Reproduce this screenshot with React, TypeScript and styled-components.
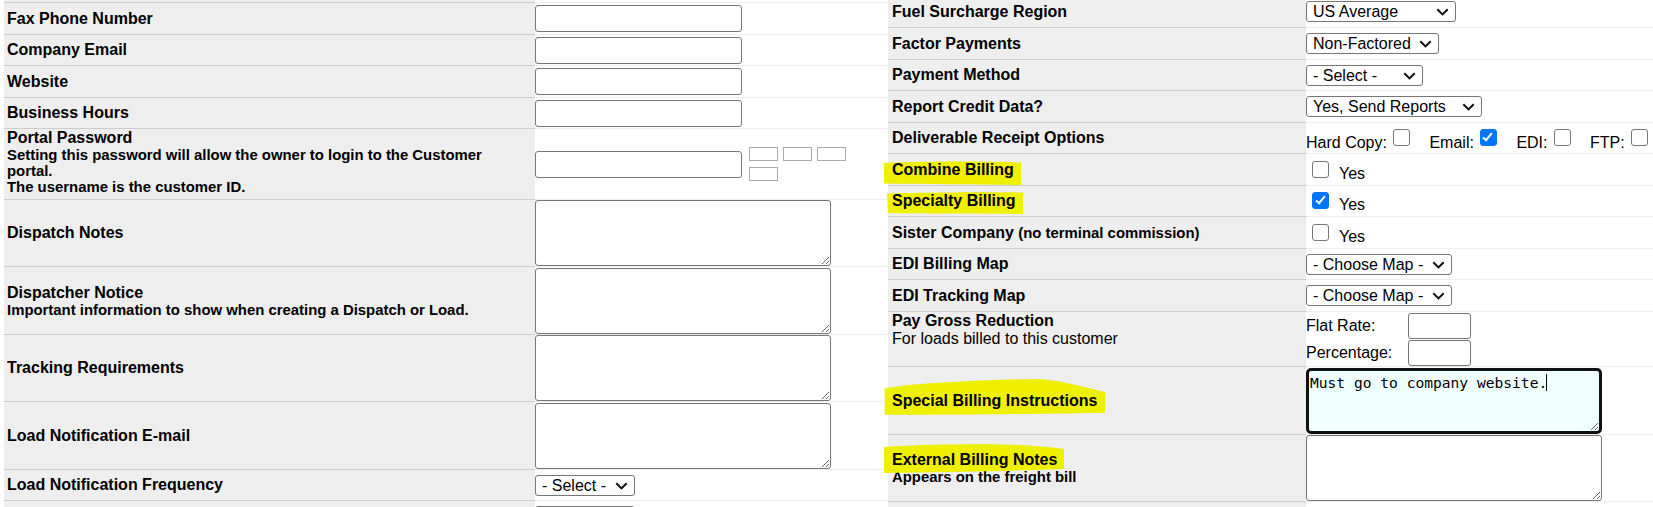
import React from "react";
import styled, { createGlobalStyle } from "styled-components";

const GlobalStyle = createGlobalStyle`
  *, *::before, *::after { box-sizing: border-box; }
  html, body { margin: 0; padding: 0; background: #fff; }
  body {
    font-family: "Liberation Sans", Arial, Helvetica, sans-serif;
    color: #000;
    overflow: hidden;
  }
`;

const Page = styled.div`
  display: flex;
  align-items: flex-start;
  gap: 1px;
  width: 1653px;
  height: 507px;
  padding-left: 4px;
  overflow: hidden;
`;

const Table = styled.div<{ $width?: number; $labelWidth: number; $pad: number; $offset?: number }>`
  --label-w: ${(p) => p.$labelWidth}px;
  --label-pad: ${(p) => p.$pad}px;
  display: flex;
  flex-direction: column;
  ${(p) => (p.$width ? `width: ${p.$width}px; flex: none;` : `flex: 1; min-width: 0;`)}
  margin-top: ${(p) => p.$offset ?? 0}px;
`;

const Row = styled.div<{ $h: number }>`
  display: grid;
  grid-template-columns: var(--label-w) 1fr;
  height: ${(p) => p.$h}px;
  flex: none;
`;

const LabelCell = styled.div<{ $top?: boolean }>`
  background: #eeeeee;
  border-bottom: 1px solid #cccccc;
  padding: 0 var(--label-pad);
  display: flex;
  flex-direction: column;
  justify-content: ${(p) => (p.$top ? "flex-start" : "center")};
  align-items: flex-start;
  font-size: 16px;
  font-weight: bold;
  line-height: normal;
`;

const ValueCell = styled.div`
  border-bottom: 1px solid #eeeeee;
  display: flex;
  align-items: center;
  min-width: 0;
  font-size: 16px;
`;

const Title = styled.div``;

const Note = styled.div<{ $regular?: boolean }>`
  font-size: ${(p) => (p.$regular ? "16px" : "14.9px")};
  font-weight: ${(p) => (p.$regular ? "normal" : "bold")};
`;

const SmallInline = styled.span`
  font-size: 14.9px;
`;

const Marked = styled.span`
  position: relative;
  display: inline-block;
`;

const MarkSvg = styled.svg<{ $x: number; $y: number }>`
  position: absolute;
  left: ${(p) => p.$x}px;
  top: ${(p) => p.$y}px;
  z-index: 0;
  pointer-events: none;
`;

const MarkText = styled.span`
  position: relative;
  z-index: 1;
`;

const TextInput = styled.input<{ $w?: number; $h?: number }>`
  width: ${(p) => p.$w ?? 207}px;
  height: ${(p) => p.$h ?? 27}px;
  margin: 0;
  padding: 1px 3px;
  border: 1px solid #767676;
  border-radius: 3px;
  background: #fff;
  font: 16px "Liberation Sans", Arial, sans-serif;
  flex: none;
`;

const TextArea = styled.textarea<{ $active?: boolean }>`
  display: block;
  width: 296px;
  height: 66px;
  margin: 0;
  padding: ${(p) => (p.$active ? "3px 1px" : "2px")};
  border: ${(p) => (p.$active ? "3px solid #111" : "1px solid #767676")};
  border-radius: ${(p) => (p.$active ? "5px" : "3px")};
  background: ${(p) => (p.$active ? "#f0ffff" : "#fff")};
  color: #000;
  font: 14.6px "DejaVu Sans Mono", "Liberation Mono", monospace;
  line-height: normal;
  resize: both;
  outline: none;
`;

const FocusWrap = styled.div`
  position: relative;
`;

const Caret = styled.span`
  position: absolute;
  left: 240px;
  top: 6px;
  width: 1px;
  height: 17px;
  background: #000;
`;

const SelectWrap = styled.span<{ $w: number }>`
  position: relative;
  display: inline-flex;
  width: ${(p) => p.$w}px;
  height: 21px;
  flex: none;
`;

const Select = styled.select`
  appearance: none;
  -webkit-appearance: none;
  width: 100%;
  height: 100%;
  margin: 0;
  padding: 0 22px 0 6px;
  border: 1px solid #767676;
  border-radius: 3px;
  background: #fff;
  color: #000;
  font: 16px "Liberation Sans", Arial, sans-serif;
`;

const Chevron = styled.svg`
  position: absolute;
  right: 7px;
  top: 7px;
  width: 13px;
  height: 8px;
  pointer-events: none;
`;

const Check = styled.input.attrs({ type: "checkbox" })`
  appearance: none;
  -webkit-appearance: none;
  position: relative;
  width: 17px;
  height: 17px;
  margin: 0;
  flex: none;
  border: 1.4px solid #767676;
  border-radius: 3px;
  background: #fff;
  &:checked {
    background: #0075ff;
    border-color: #0075ff;
  }
  &:checked::after {
    content: "";
    position: absolute;
    left: 4.6px;
    top: 1px;
    width: 5px;
    height: 10px;
    border: solid #fff;
    border-width: 0 2.6px 2.6px 0;
    transform: rotate(40deg);
  }
`;

const OptionGroup = styled.div`
  display: flex;
  align-items: flex-end;
  padding-top: 4px;
  font-weight: normal;
  white-space: nowrap;
`;

const OptionText = styled.span`
  line-height: normal;
  white-space: nowrap;
  flex: none;
`;

const OptionCheck = styled(Check)`
  margin: 0 19.5px 6px 6px;
`;

const YesOption = styled.label`
  display: flex;
  align-items: flex-end;
  gap: 10px;
  padding-top: 4px;
  margin-left: 6px;
`;

const YesCheck = styled(Check)`
  margin-bottom: 5px;
`;

const RateGrid = styled.div`
  display: grid;
  grid-template-columns: 102px auto;
  row-gap: 1px;
  align-items: center;
`;

const PasswordLine = styled.div`
  display: flex;
  align-items: center;
`;

const MeterGrid = styled.div`
  display: grid;
  grid-template-columns: repeat(3, 29px);
  gap: 6px 5px;
  margin-left: 7px;
`;

const MeterCell = styled.span`
  display: block;
  height: 14px;
  border: 1px solid #aaaaaa;
`;

function Dropdown({ w, value }: { w: number; value: string }) {
  return (
    <SelectWrap $w={w}>
      <Select defaultValue={value}>
        <option>{value}</option>
      </Select>
      <Chevron viewBox="0 0 13 8">
        <path d="M1.3 1.3 L6.5 6.4 L11.7 1.3" fill="none" stroke="#111" strokeWidth="2.1" />
      </Chevron>
    </SelectWrap>
  );
}

function Highlight({
  text,
  x,
  y,
  w,
  h,
  d,
}: {
  text: string;
  x: number;
  y: number;
  w: number;
  h: number;
  d: string;
}) {
  return (
    <Marked>
      <MarkSvg $x={x} $y={y} width={w} height={h} viewBox={`0 0 ${w} ${h}`}>
        <path d={d} fill="#efef00" />
      </MarkSvg>
      <MarkText>{text}</MarkText>
    </Marked>
  );
}

function YesBox({ checked }: { checked?: boolean }) {
  return (
    <YesOption>
      <YesCheck defaultChecked={checked} />
      <OptionText>Yes</OptionText>
    </YesOption>
  );
}

export default function App() {
  return (
    <>
      <GlobalStyle />
      <Page>
        <Table $width={883} $labelWidth={531} $pad={3}>
          <Row $h={3}>
            <LabelCell />
            <ValueCell />
          </Row>
          <Row $h={32}>
            <LabelCell>Fax Phone Number</LabelCell>
            <ValueCell>
              <TextInput />
            </ValueCell>
          </Row>
          <Row $h={31}>
            <LabelCell>Company Email</LabelCell>
            <ValueCell>
              <TextInput />
            </ValueCell>
          </Row>
          <Row $h={32}>
            <LabelCell>Website</LabelCell>
            <ValueCell>
              <TextInput />
            </ValueCell>
          </Row>
          <Row $h={31}>
            <LabelCell>Business Hours</LabelCell>
            <ValueCell>
              <TextInput />
            </ValueCell>
          </Row>
          <Row $h={71}>
            <LabelCell $top>
              <Title>Portal Password</Title>
              <Note>
                Setting this password will allow the owner to login to the Customer
                <br />
                portal.
              </Note>
              <Note>The username is the customer ID.</Note>
            </LabelCell>
            <ValueCell>
              <PasswordLine>
                <TextInput type="password" />
                <MeterGrid>
                  <MeterCell />
                  <MeterCell />
                  <MeterCell />
                  <MeterCell />
                </MeterGrid>
              </PasswordLine>
            </ValueCell>
          </Row>
          <Row $h={67}>
            <LabelCell>Dispatch Notes</LabelCell>
            <ValueCell>
              <TextArea />
            </ValueCell>
          </Row>
          <Row $h={68}>
            <LabelCell>
              <Title>Dispatcher Notice</Title>
              <Note>Important information to show when creating a Dispatch or Load.</Note>
            </LabelCell>
            <ValueCell>
              <TextArea />
            </ValueCell>
          </Row>
          <Row $h={67}>
            <LabelCell>Tracking Requirements</LabelCell>
            <ValueCell>
              <TextArea />
            </ValueCell>
          </Row>
          <Row $h={68}>
            <LabelCell>Load Notification E-mail</LabelCell>
            <ValueCell>
              <TextArea />
            </ValueCell>
          </Row>
          <Row $h={31}>
            <LabelCell>Load Notification Frequency</LabelCell>
            <ValueCell>
              <Dropdown w={100} value="- Select -" />
            </ValueCell>
          </Row>
          <Row $h={31}>
            <LabelCell />
            <ValueCell>
              <Dropdown w={100} value="- Select -" />
            </ValueCell>
          </Row>
        </Table>

        <Table $labelWidth={418} $pad={4} $offset={-4}>
          <Row $h={32}>
            <LabelCell>Fuel Surcharge Region</LabelCell>
            <ValueCell>
              <Dropdown w={150} value="US Average" />
            </ValueCell>
          </Row>
          <Row $h={32}>
            <LabelCell>Factor Payments</LabelCell>
            <ValueCell>
              <Dropdown w={133} value="Non-Factored" />
            </ValueCell>
          </Row>
          <Row $h={31}>
            <LabelCell>Payment Method</LabelCell>
            <ValueCell>
              <Dropdown w={117} value="- Select -" />
            </ValueCell>
          </Row>
          <Row $h={32}>
            <LabelCell>Report Credit Data?</LabelCell>
            <ValueCell>
              <Dropdown w={176} value="Yes, Send Reports" />
            </ValueCell>
          </Row>
          <Row $h={31}>
            <LabelCell>Deliverable Receipt Options</LabelCell>
            <ValueCell>
              <OptionGroup>
                <OptionText>Hard Copy:</OptionText>
                <OptionCheck />
                <OptionText>Email:</OptionText>
                <OptionCheck defaultChecked />
                <OptionText>EDI:</OptionText>
                <OptionCheck />
                <OptionText>FTP:</OptionText>
                <OptionCheck />
              </OptionGroup>
            </ValueCell>
          </Row>
          <Row $h={32}>
            <LabelCell>
              <Highlight
                text="Combine Billing"
                x={-8}
                y={0}
                w={137}
                h={24}
                d="M0 2 C25 0.6 90 -0.2 137 1.6 L137 24 C95 23.6 40 23.2 0 22.6 Z"
              />
            </LabelCell>
            <ValueCell>
              <YesBox />
            </ValueCell>
          </Row>
          <Row $h={31}>
            <LabelCell>
              <Highlight
                text="Specialty Billing"
                x={-5}
                y={0}
                w={136}
                h={22}
                d="M0 1.6 C30 0.6 100 0 136 0.6 L136 22 C90 21.6 40 21.8 1 21 Z"
              />
            </LabelCell>
            <ValueCell>
              <YesBox checked />
            </ValueCell>
          </Row>
          <Row $h={32}>
            <LabelCell>
              <Title>
                Sister Company <SmallInline>(no terminal commission)</SmallInline>
              </Title>
            </LabelCell>
            <ValueCell>
              <YesBox />
            </ValueCell>
          </Row>
          <Row $h={31}>
            <LabelCell>EDI Billing Map</LabelCell>
            <ValueCell>
              <Dropdown w={146} value="- Choose Map -" />
            </ValueCell>
          </Row>
          <Row $h={32}>
            <LabelCell>EDI Tracking Map</LabelCell>
            <ValueCell>
              <Dropdown w={146} value="- Choose Map -" />
            </ValueCell>
          </Row>
          <Row $h={55}>
            <LabelCell $top>
              <Title>Pay Gross Reduction</Title>
              <Note $regular>For loads billed to this customer</Note>
            </LabelCell>
            <ValueCell>
              <RateGrid>
                <OptionText>Flat Rate:</OptionText>
                <TextInput $w={63} $h={26} />
                <OptionText>Percentage:</OptionText>
                <TextInput $w={63} $h={26} />
              </RateGrid>
            </ValueCell>
          </Row>
          <Row $h={68}>
            <LabelCell>
              <Highlight
                text="Special Billing Instructions"
                x={-8}
                y={-14}
                w={221}
                h={38}
                d="M0.7 10.7 C10 8.4 30 6 60 4.5 C90 3 120 1.4 152 1 C175 1.6 195 8 221 14 L221 34.7 C180 35.6 100 36.6 0.7 36.8 Z"
              />
            </LabelCell>
            <ValueCell>
              <FocusWrap>
                <TextArea $active defaultValue="Must go to company website." />
                <Caret />
              </FocusWrap>
            </ValueCell>
          </Row>
          <Row $h={67}>
            <LabelCell>
              <Title>
                <Highlight
                  text="External Billing Notes"
                  x={-8}
                  y={-7}
                  w={180}
                  h={29}
                  d="M0 3 C30 1 60 0.3 100 0.3 C140 0.5 165 2.5 180 5 L180 25 C140 26.6 60 28.4 0 29 Z"
                />
              </Title>
              <Note>Appears on the freight bill</Note>
            </LabelCell>
            <ValueCell>
              <TextArea />
            </ValueCell>
          </Row>
          <Row $h={31}>
            <LabelCell />
            <ValueCell />
          </Row>
        </Table>
      </Page>
    </>
  );
}
